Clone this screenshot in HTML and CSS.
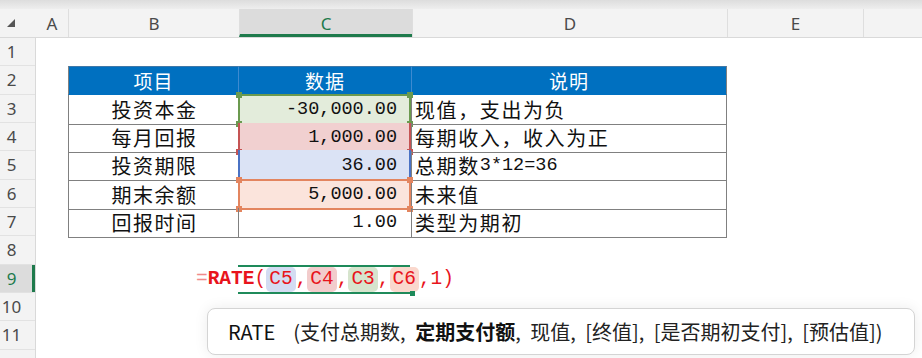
FILE: index.html
```html
<!DOCTYPE html>
<html lang="zh-CN">
<head>
  <meta charset="UTF-8">
  <title>RATE</title>
  <link rel="stylesheet" href="styles.css">
</head>
<body>
  <div class="app">
    <div class="topbar"></div>
    <div class="col-heads">
      <div class="corner">
        <svg width="10" height="10" viewBox="0 0 10 10"><polygon points="9,1 9,9 1,9" fill="#555"/></svg>
      </div>
      <div class="col-head w-a">A</div>
      <div class="col-head w-b">B</div>
      <div class="col-head w-c active">C</div>
      <div class="col-head w-d">D</div>
      <div class="col-head w-e">E</div>
      <div class="col-head w-f"></div>
    </div>
    <div class="body">
      <div class="row-heads">
        <div class="row-head">1</div>
        <div class="row-head">2</div>
        <div class="row-head">3</div>
        <div class="row-head">4</div>
        <div class="row-head">5</div>
        <div class="row-head">6</div>
        <div class="row-head">7</div>
        <div class="row-head">8</div>
        <div class="row-head active">9</div>
        <div class="row-head">10</div>
        <div class="row-head">11</div>
        <div class="row-head">12</div>
      </div>
      <div class="sheet">
        <div class="row"></div>
        <div class="row">
          <div></div>
          <div class="cell th first">项目</div>
          <div class="cell th">数据</div>
          <div class="cell th last">说明</div>
        </div>
        <div class="row">
          <div></div>
          <div class="cell lbl">投资本金</div>
          <div class="cell num">
            <div class="hl green"><i class="hd tl"></i><i class="hd tr"></i><i class="hd bl"></i><i class="hd br"></i></div>
            <span>-30,000.00</span>
          </div>
          <div class="cell txt">现值，支出为负</div>
        </div>
        <div class="row">
          <div></div>
          <div class="cell lbl">每月回报</div>
          <div class="cell num">
            <div class="hl red"><i class="hd bl"></i><i class="hd br"></i></div>
            <span>1,000.00</span>
          </div>
          <div class="cell txt">每期收入，收入为正</div>
        </div>
        <div class="row">
          <div></div>
          <div class="cell lbl">投资期限</div>
          <div class="cell num">
            <div class="hl blue"></div>
            <span>36.00</span>
          </div>
          <div class="cell txt">总期数<span class="ascii">3*12=36</span></div>
        </div>
        <div class="row">
          <div></div>
          <div class="cell lbl">期末余额</div>
          <div class="cell num">
            <div class="hl orange"><i class="hd tl"></i><i class="hd tr"></i><i class="hd bl"></i><i class="hd br"></i></div>
            <span>5,000.00</span>
          </div>
          <div class="cell txt">未来值</div>
        </div>
        <div class="row">
          <div></div>
          <div class="cell lbl">回报时间</div>
          <div class="cell num"><span>1.00</span></div>
          <div class="cell txt">类型为期初</div>
        </div>
        <div class="row"></div>
        <div class="row">
          <div></div>
          <div></div>
          <div class="edit">
            <div class="formula"><span class="eq">=</span><b>RATE</b>(<span class="ref r-blue">C5</span>,<span class="ref r-red">C4</span>,<span class="ref r-green">C3</span>,<span class="ref r-orange">C6</span>,1)</div>
            <i class="fill"></i>
          </div>
        </div>
        <div class="row"></div>
        <div class="row"></div>
        <div class="row"></div>
      </div>
    </div>
    <div class="tip">
      <span class="fn">RATE</span>
      <span class="args">(支付总期数, <b>定期支付额</b>, 现值, [终值], [是否期初支付], [预估值])</span>
    </div>
  </div>
</body>
</html>
```

FILE: styles.css
```css
body {
  margin: 0;
  background: #fff;
  font-family: "Noto Sans", "Noto Sans CJK SC", sans-serif;
}

.app {
  position: relative;
  width: 922px;
  height: 358px;
  overflow: hidden;
}

.topbar {
  height: 9px;
  background: linear-gradient(#dddddd, #eeeeee);
}

/* column headers */
.col-heads {
  display: flex;
  height: 29px;
  background: #f3f3f3;
  border-bottom: 1px solid #d9d9d9;
  box-sizing: border-box;
}

.corner {
  width: 36px;
  display: flex;
  align-items: center;
  padding-left: 6px;
  box-sizing: border-box;
}

.col-head {
  display: flex;
  align-items: center;
  justify-content: center;
  font-size: 17px;
  color: #4a4a4a;
  border-left: 1px solid #dedede;
  box-sizing: border-box;
}

.col-heads .w-a { border-left: none; }

.col-head.active {
  background: #dcdcdc;
  color: #1e7a4c;
  border-bottom: 3px solid #1e7a4c;
  padding-top: 3px;
}

.w-a { width: 32px; }
.w-b { width: 171px; }
.w-c { width: 173px; }
.w-d { width: 315px; }
.w-e { width: 136px; }
.w-f { flex: 1; }

/* body */
.body {
  display: flex;
}

.row-heads {
  width: 36px;
  background: #f3f3f3;
  border-right: 1px solid #d9d9d9;
  box-sizing: border-box;
}

.row-head {
  height: 28.33px;
  display: flex;
  align-items: center;
  justify-content: center;
  padding-right: 12px;
  font-size: 17px;
  color: #4a4a4a;
  border-bottom: 1px solid #e2e2e2;
  box-sizing: border-box;
}

.row-head.active {
  background: #dcdcdc;
  color: #1e7a4c;
  box-shadow: inset -3px 0 0 #1e7a4c;
}

.sheet {
  flex: 1;
}

.row {
  display: grid;
  grid-template-columns: 32px 171px 173px 315px 136px 1fr;
  height: 28.33px;
}

/* table cells */
.cell {
  position: relative;
  display: flex;
  align-items: center;
  border-right: 1px solid #808080;
  border-bottom: 1px solid #808080;
  box-sizing: border-box;
  color: #111;
}

.th {
  background: #0070c0;
  color: #fff;
  justify-content: center;
  font-family: "Noto Sans CJK SC", sans-serif;
  font-size: 19px;
  letter-spacing: 1px;
  border-top: 1px solid #3f78a8;
  border-right-color: #3d8ad0;
  border-bottom-color: #0070c0;
}

.th.first,
.lbl {
  border-left: 1px solid #808080;
}

.th.last {
  border-right-color: #808080;
}

.lbl {
  justify-content: center;
  font-family: "Noto Sans CJK SC", sans-serif;
  font-size: 20px;
  letter-spacing: 1.5px;
  padding-left: 2px;
}

.num {
  justify-content: flex-end;
  padding-right: 14px;
  font-family: "Liberation Mono", monospace;
  font-size: 18.5px;
}

.num span {
  position: relative;
}

.txt {
  padding-left: 3px;
  font-family: "Noto Sans CJK SC", sans-serif;
  font-size: 20px;
  letter-spacing: 1.6px;
}

.ascii {
  font-family: "Liberation Mono", monospace;
  font-size: 18.5px;
  letter-spacing: 0;
}

/* reference highlights */
.hl {
  position: absolute;
  top: -1px;
  left: -1px;
  right: 0;
  bottom: -1px;
  box-sizing: border-box;
}

.hl.green {
  background: #e3ecdb;
  border: 2px solid #6b9a4f;
}

.hl.red {
  background: #f1d0d0;
  border: 2px solid #c55454;
  border-top: none;
  top: 0;
}

.hl.blue {
  background: #dbe3f5;
  border-left: 2px solid #4a72c4;
  border-right: 2px solid #4a72c4;
}

.hl.orange {
  background: #fbe4dc;
  border: 2px solid #e3855f;
}

.hd {
  position: absolute;
  width: 6px;
  height: 6px;
}

.green .hd { background: #6b9a4f; }
.red .hd { background: #c55454; }
.orange .hd { background: #e3855f; }

.hd.tl { left: -4px; top: -4px; }
.hd.tr { right: -4px; top: -4px; }
.hd.bl { left: -4px; bottom: -4px; }
.hd.br { right: -4px; bottom: -4px; }

/* formula being edited in C9 */
.edit {
  position: relative;
  display: flex;
  align-items: center;
  justify-content: center;
  border-top: 2px solid #1e8a5a;
  border-bottom: 2px solid #1e8a5a;
  margin-left: -1px;
  margin-right: 2px;
  box-sizing: border-box;
}

.fill {
  position: absolute;
  right: -5px;
  bottom: -4px;
  width: 5px;
  height: 5px;
  background: #1e8a5a;
}

.formula {
  white-space: nowrap;
  font-family: "Liberation Mono", monospace;
  font-size: 19.5px;
  color: #e8141c;
  padding-left: 2px;
}

.formula b {
  font-weight: bold;
}

.eq {
  color: #f08a8a;
}

.ref {
  display: inline-block;
  padding: 0 3px;
  border-radius: 5px;
  line-height: 25px;
}

.r-blue { background: #d3dcf2; }
.r-red { background: #f2cccc; }
.r-green { background: #d6e4cd; }
.r-orange { background: #fad8cd; }

/* function hint */
.tip {
  position: absolute;
  left: 207px;
  top: 308px;
  width: 708px;
  height: 47px;
  display: flex;
  align-items: center;
  padding-left: 20px;
  box-sizing: border-box;
  background: #fff;
  border: 1px solid #d4d4d4;
  border-radius: 8px;
  box-shadow: 0 0 14px rgba(0, 0, 0, 0.08);
  font-family: "Noto Sans CJK SC", sans-serif;
  font-size: 20px;
  color: #222;
  white-space: nowrap;
}

.tip .fn {
  color: #111;
  margin-right: 18px;
}

.tip .args {
  word-spacing: 5px;
}

.tip b {
  font-weight: bold;
  color: #111;
}
```
